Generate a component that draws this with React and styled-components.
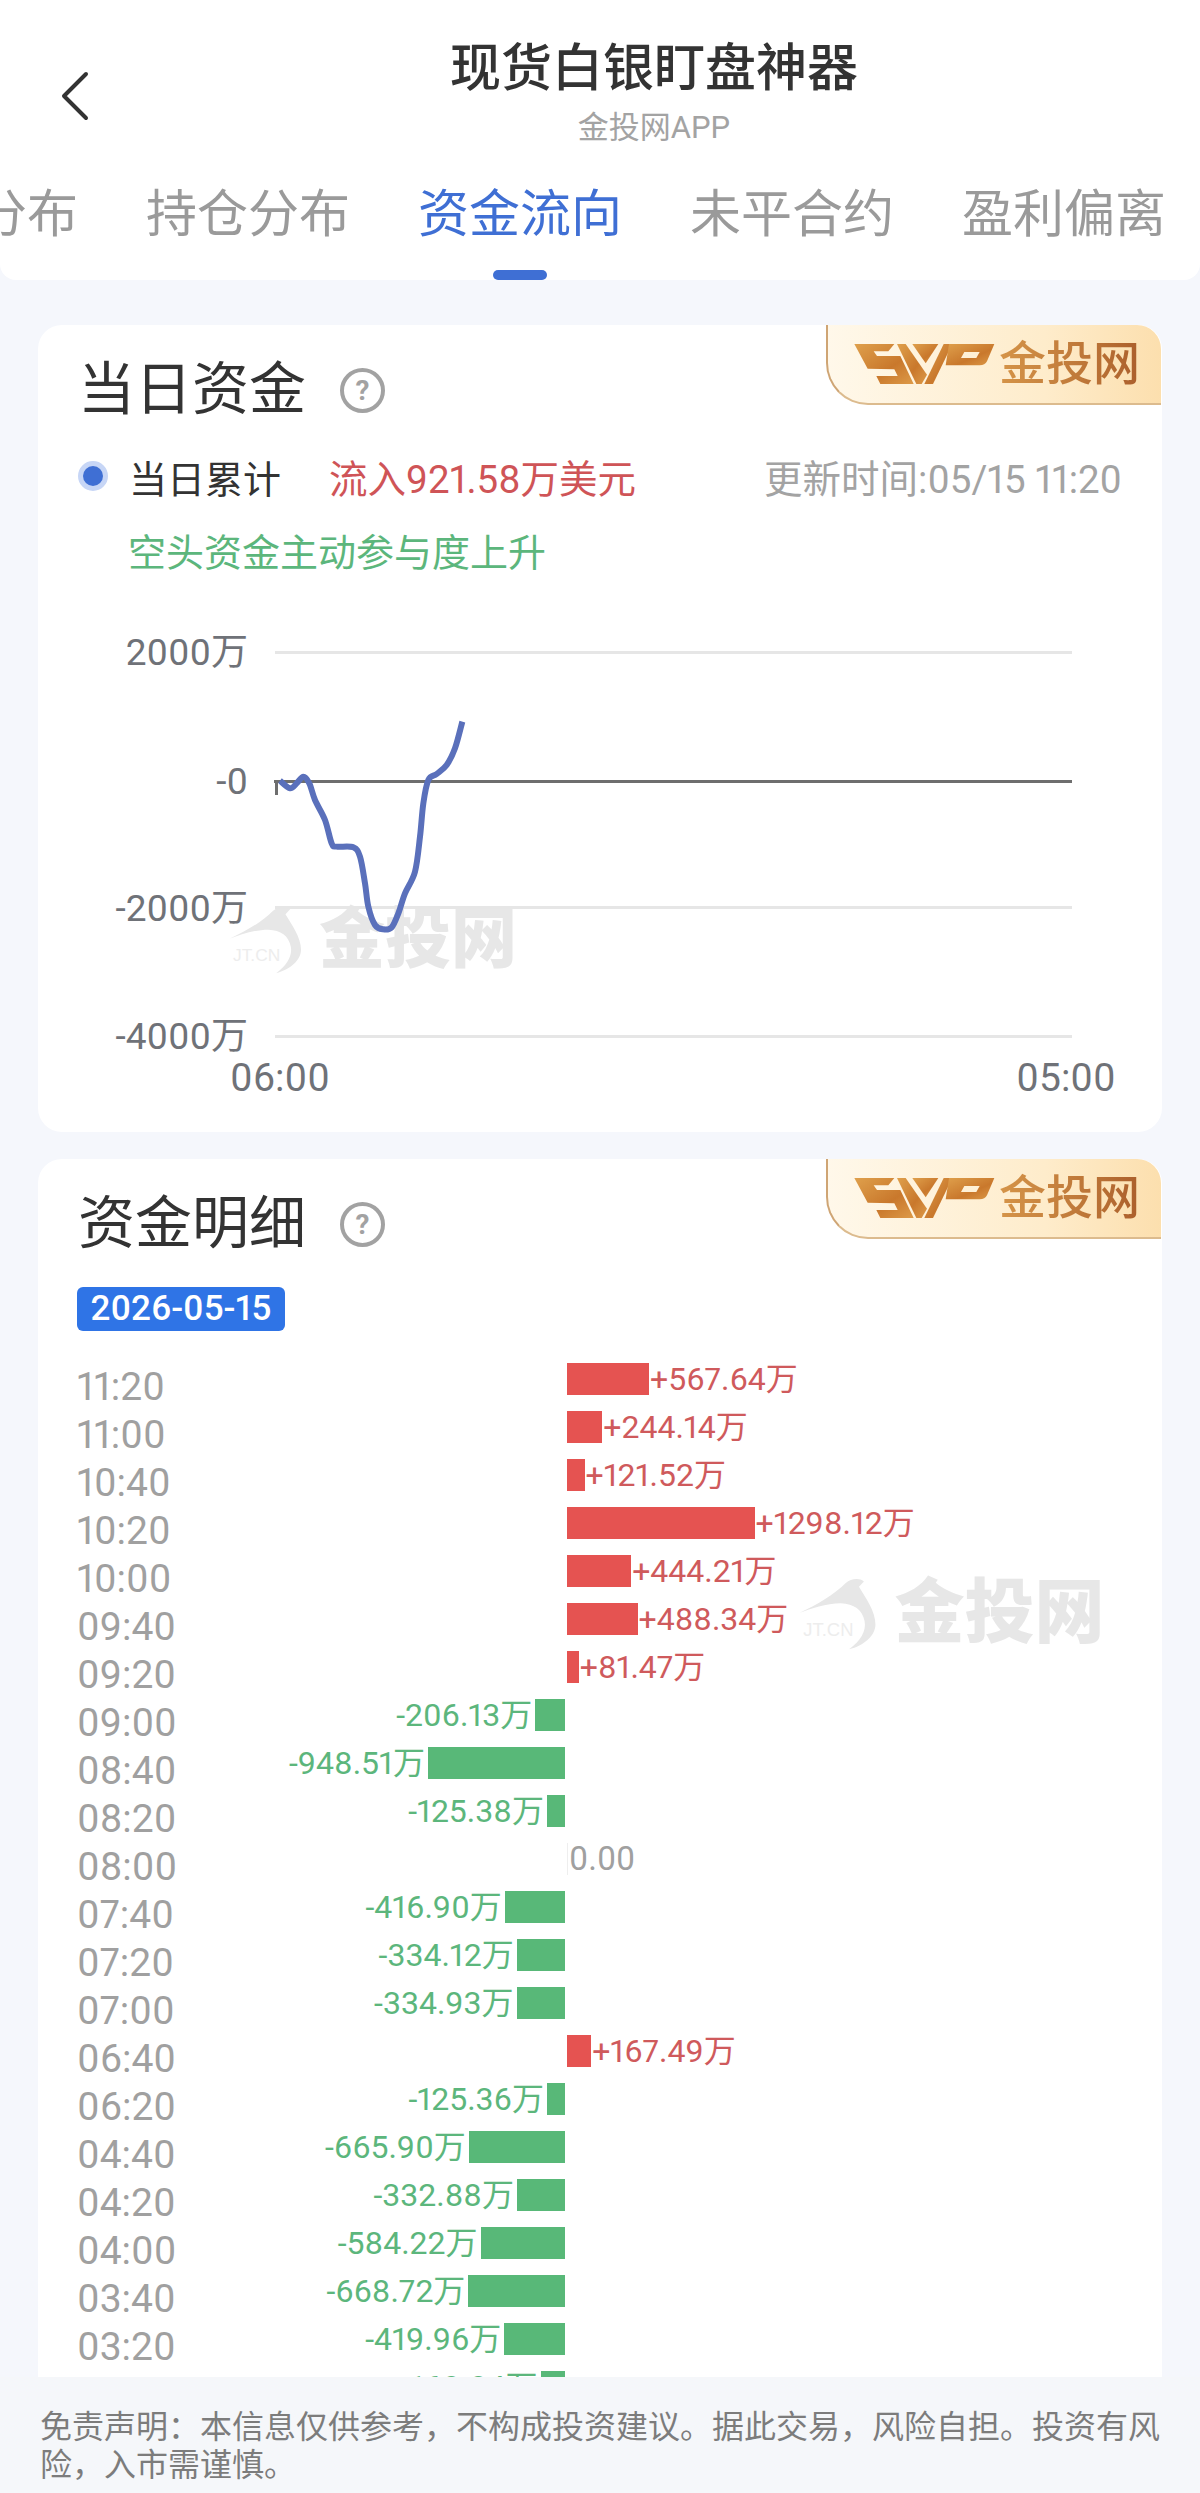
import styled, { createGlobalStyle } from "styled-components";

const GlobalStyle = createGlobalStyle`
  html, body {
    margin: 0;
    padding: 0;
    background: #f5f7fc;
  }
  * {
    box-sizing: border-box;
  }
`;

const Page = styled.div`
  display: flex;
  flex-direction: column;
  width: 1200px;
  height: 2493px;
  overflow: hidden;
  background: #f5f7fc;
  font-family: Roboto, "Noto Sans CJK SC", sans-serif;
  font-variant-numeric: proportional-nums;
`;

const Header = styled.header`
  flex: none;
  height: 280px;
  padding-top: 41px;
  background: #fff;
  border-radius: 0 0 16px 16px;
  overflow: hidden;
`;

const Nav = styled.div`
  display: grid;
  grid-template-columns: 108px 1fr;
  height: 107px;
`;

const Back = styled.div`
  display: flex;
  align-items: center;
  padding: 2px 0 0 61px;
`;

const NavText = styled.div`
  display: flex;
  flex-direction: column;
  align-items: center;
`;

const NavTitle = styled.div`
  font-size: 51px;
  line-height: 56px;
  font-weight: 500;
  color: #333;
`;

const NavSub = styled.div`
  margin-top: 11px;
  font-size: 31px;
  line-height: 40px;
  color: #a3a3a3;
`;

const Tabs = styled.div`
  display: flex;
  gap: 68px;
  margin: 37px 0 0 -126px;
  width: 1400px;
`;

const Tab = styled.div`
  flex: none;
  font-size: 51px;
  line-height: 60px;
  white-space: nowrap;
  color: ${(p) => (p.$active ? "#3f6fd4" : "#9a9a9a")};

  &::after {
    content: "";
    display: block;
    width: 54px;
    height: 10px;
    margin: 25px auto 0;
    border-radius: 5px;
    background: ${(p) => (p.$active ? "#3f6fd4" : "transparent")};
  }
`;

const Content = styled.main`
  flex: 1;
  min-height: 0;
  overflow: hidden;
  display: flex;
  flex-direction: column;
  gap: 27px;
  padding: 45px 38px 0;
`;

const Card = styled.section`
  position: relative;
  flex: none;
  background: #fff;
  border-radius: 24px;
  padding-top: 37px;
`;

const CardHead = styled.div`
  display: flex;
  align-items: center;
  gap: 34px;
  padding-left: 40px;
`;

const CardTitle = styled.h2`
  margin: 0;
  font-size: 57px;
  line-height: 56px;
  font-weight: 400;
  color: #333;
`;

const Help = styled.span`
  display: flex;
  align-items: center;
  justify-content: center;
  width: 45px;
  height: 45px;
  border: 4px solid #a2a2a2;
  border-radius: 50%;
  font-size: 28px;
  font-weight: 700;
  color: #a2a2a2;
`;

const Badge = styled.div`
  position: absolute;
  top: 0;
  right: 1px;
  display: flex;
  align-items: center;
  gap: 0;
  width: 335px;
  height: 80px;
  padding-left: 19px;
  border-left: 2px solid #cfa574;
  border-bottom: 2px solid #dcbb8e;
  border-radius: 0 24px 0 42px;
  background: linear-gradient(90deg, #fff8ea 0%, #feeccb 65%, #fcdfae 100%);
`;

const BadgeText = styled.span`
  margin-left: -3px;
  font-size: 47px;
  line-height: 60px;
  font-weight: 500;
  background: linear-gradient(90deg, #d59448 0%, #c07a3a 55%, #ab5f2c 100%);
  -webkit-background-clip: text;
  background-clip: text;
  color: transparent;
`;

const LogoWrap = styled.span`
  display: flex;
  flex: none;
  filter: blur(0.5px);
`;

const Legend = styled.div`
  display: flex;
  align-items: center;
  height: 44px;
  margin-top: 36px;
  padding: 0 40px;
  font-size: 38.5px;
  white-space: nowrap;
`;

const Dot = styled.span`
  flex: none;
  width: 30px;
  height: 30px;
  border-radius: 50%;
  background: #c7d6f6;
  border: 5px solid #c7d6f6;

  &::before {
    content: "";
    display: block;
    width: 20px;
    height: 20px;
    border-radius: 50%;
    background: #3f6fd4;
  }
`;

const LegendName = styled.span`
  margin-left: 21px;
  font-size: 38px;
  color: #333;
`;

const Inflow = styled.span`
  margin-left: 48px;
  color: #cf5457;
`;

const Updated = styled.span`
  margin-left: auto;
  color: #a3a3a3;
`;

const Trend = styled.div`
  margin: 33px 0 0 90px;
  font-size: 38px;
  line-height: 44px;
  color: #5cb67c;
`;

const ChartSvg = styled.svg`
  position: relative;
  z-index: 1;
  display: block;
  width: 1124px;
  height: 490px;
  margin: 45px 0 22px;
`;

const AxisText = styled.text`
  font-family: Roboto, "Noto Sans CJK SC", sans-serif;
  font-size: ${(p) => p.$size || 37}px;
  fill: #6f7278;
`;

const Watermark = styled.div`
  position: absolute;
  left: ${(p) => p.$left}px;
  top: ${(p) => p.$top}px;
  display: flex;
  align-items: center;
  gap: 0.25em;
  font-size: ${(p) => p.$size}px;
  line-height: 1.05;
  font-weight: 900;
  color: #e7e7e7;
  white-space: nowrap;
  pointer-events: none;

  svg {
    width: 1.13em;
    height: 1.05em;
  }
`;

const DateTag = styled.div`
  width: 208px;
  height: 44px;
  margin: 35px 0 0 39px;
  border-radius: 6px;
  background: #2f74e6;
  color: #fff;
  font-size: 35px;
  line-height: 44px;
  font-weight: 500;
  text-align: center;
`;

const Rows = styled.div`
  margin: 32px 0 0 39px;
`;

const Row = styled.div`
  display: grid;
  grid-template-columns: 488px 1fr;
  column-gap: 2px;
  height: 48px;
`;

const NegSide = styled.div`
  display: flex;
  align-items: flex-start;
`;

const Time = styled.span`
  font-size: 39px;
  line-height: 48px;
  color: #a0a0a0;
`;

const Value = styled.span`
  font-size: 32px;
  line-height: 32px;
  white-space: nowrap;
  color: ${(p) => (p.$up ? "#cf5a5c" : "#5cb67c")};
`;

const NegValue = styled(Value)`
  margin: 0 3px 0 auto;
`;

const PosSide = styled.div`
  display: flex;
  align-items: flex-start;
  gap: 1px;
`;

const Bar = styled.span`
  flex: none;
  height: 32px;
  background: ${(p) => (p.$up ? "#e55351" : "#58b878")};
`;

const Zero = styled.span`
  height: 32px;
  padding-left: 1px;
  border-left: 1px solid #eee;
  font-size: 33px;
  line-height: 32px;
  color: #a0a0a0;
`;

const Footer = styled.footer`
  flex: none;
  height: 116px;
  padding: 31px 36px 0 40px;
  background: #f5f7fa;
  font-size: 32px;
  line-height: 38px;
  color: #7c7c7c;
`;

const TABS = ["多空分布", "持仓分布", "资金流向", "未平合约", "盈利偏离"];

const FLOWS = [
  ["11:20", 567.64], ["11:00", 244.14], ["10:40", 121.52], ["10:20", 1298.12],
  ["10:00", 444.21], ["09:40", 488.34], ["09:20", 81.47], ["09:00", -206.13],
  ["08:40", -948.51], ["08:20", -125.38], ["08:00", 0], ["07:40", -416.9],
  ["07:20", -334.12], ["07:00", -334.93], ["06:40", 167.49], ["06:20", -125.36],
  ["04:40", -665.9], ["04:20", -332.88], ["04:00", -584.22], ["03:40", -668.72],
  ["03:20", -419.96], ["03:00", -168.84],
];

// traced from the chart, in page pixels
const CURVE = [
  [600, 482], [630, 505], [650, 490], [670, 470], [688, 490], [705, 540], [735, 600],
  [755, 670], [770, 680], [820, 682], [840, 710], [855, 790], [865, 860], [885, 915],
  [910, 928], [935, 922], [955, 880], [975, 820], [1005, 755], [1020, 650], [1030, 550],
  [1045, 480], [1070, 462], [1100, 435], [1125, 385], [1147, 305],
].map(([x, y]) => [80 + x / 3, 620 + y / 3]);

const smoothPath = (pts) => {
  let d = `M${pts[0][0]} ${pts[0][1]}`;
  for (let i = 0; i < pts.length - 1; i++) {
    const p0 = pts[i - 1] || pts[i];
    const p1 = pts[i];
    const p2 = pts[i + 1];
    const p3 = pts[i + 2] || p2;
    const c1 = [p1[0] + (p2[0] - p0[0]) / 6, p1[1] + (p2[1] - p0[1]) / 6];
    const c2 = [p2[0] - (p3[0] - p1[0]) / 6, p2[1] - (p3[1] - p1[1]) / 6];
    d += ` C${c1[0]} ${c1[1]} ${c2[0]} ${c2[1]} ${p2[0]} ${p2[1]}`;
  }
  return d;
};

function Bird() {
  return (
    <svg viewBox="20 18 240 220">
      <path
        fill="#e7e7e7"
        d="M25 125 C80 100 130 70 165 35 C180 22 205 18 220 30 L205 46 C225 80 255 120 255 160 C255 195 220 225 175 236 C210 210 228 180 222 150 C215 115 190 98 150 96 C105 96 60 112 25 125 Z"
      />
      <text x="36" y="196" fontSize="56" fontWeight="400" fontFamily="Liberation Sans, sans-serif" fill="#ededed">
        JT.CN
      </text>
    </svg>
  );
}

function SvpLogo() {
  return (
    <svg width="155" height="60" viewBox="0 0 465 180">
      <defs>
        <linearGradient id="svp" x1="0" y1="0" x2="1" y2="1">
          <stop offset="0" stopColor="#dfa04c" />
          <stop offset="0.6" stopColor="#c9782c" />
          <stop offset="1" stopColor="#dd9a48" />
        </linearGradient>
      </defs>
      <g fill="url(#svp)">
        <polygon points="22,30 142,30 124,52 80,52 90,66 160,66 200,150 100,150 88,126 152,126 142,106 62,104" />
        <polygon points="150,30 176,30 240,122 224,150 208,150" />
        <polygon points="196,30 274,30 236,88" />
        <polygon points="290,30 316,30 258,150 232,150" />
        <path
          fillRule="evenodd"
          d="M306 30 H442 L420 82 Q414 94 398 94 H318 L296 94 Z M352 54 L342 72 H388 L398 54 Z"
        />
      </g>
    </svg>
  );
}

function BackIcon() {
  return (
    <svg width="28" height="50" viewBox="0 0 28 50" fill="none">
      <polyline points="25,3 3,25 25,47" stroke="#333" strokeWidth="4" strokeLinecap="round" strokeLinejoin="round" />
    </svg>
  );
}

function VipBadge() {
  return (
    <Badge>
      <LogoWrap>
        <SvpLogo />
      </LogoWrap>
      <BadgeText>金投网</BadgeText>
    </Badge>
  );
}

function FlowRow({ time, value }) {
  const width = Math.abs(value) * 0.1445;
  const text = `${value > 0 ? "+" : ""}${value.toFixed(2)}万`;
  return (
    <Row>
      <NegSide>
        <Time>{time}</Time>
        {value < 0 && <NegValue>{text}</NegValue>}
        {value < 0 && <Bar style={{ width }} />}
      </NegSide>
      <PosSide>
        {value > 0 && <Bar $up style={{ width }} />}
        {value > 0 && <Value $up>{text}</Value>}
        {value === 0 && <Zero>0.00</Zero>}
      </PosSide>
    </Row>
  );
}

export default function App() {
  return (
    <Page>
      <GlobalStyle />
      <Header>
        <Nav>
          <Back>
            <BackIcon />
          </Back>
          <NavText>
            <NavTitle>现货白银盯盘神器</NavTitle>
            <NavSub>金投网APP</NavSub>
          </NavText>
        </Nav>
        <Tabs>
          {TABS.map((t) => (
            <Tab key={t} $active={t === "资金流向"}>
              {t}
            </Tab>
          ))}
        </Tabs>
      </Header>

      <Content>
        <Card>
          <VipBadge />
          <CardHead>
            <CardTitle>当日资金</CardTitle>
            <Help>?</Help>
          </CardHead>
          <Legend>
            <Dot />
            <LegendName>当日累计</LegendName>
            <Inflow>流入921.58万美元</Inflow>
            <Updated>更新时间:05/15 11:20</Updated>
          </Legend>
          <Trend>空头资金主动参与度上升</Trend>
          <ChartSvg viewBox="38 620 1124 490">
            <line x1="275" x2="1072" y1="652.5" y2="652.5" stroke="#e6e6e6" strokeWidth="3" />
            <line x1="275" x2="1072" y1="907.5" y2="907.5" stroke="#e6e6e6" strokeWidth="3" />
            <line x1="275" x2="1072" y1="1036.5" y2="1036.5" stroke="#e6e6e6" strokeWidth="3" />
            <line x1="274" x2="1072" y1="781.5" y2="781.5" stroke="#6e6e6e" strokeWidth="3" />
            <line x1="276.5" x2="276.5" y1="781" y2="795" stroke="#6e6e6e" strokeWidth="3" />
            <AxisText x="248" y="665" textAnchor="end">2000万</AxisText>
            <AxisText x="248" y="794" textAnchor="end">-0</AxisText>
            <AxisText x="248" y="921" textAnchor="end">-2000万</AxisText>
            <AxisText x="248" y="1049" textAnchor="end">-4000万</AxisText>
            <AxisText $size={39} x="280" y="1091" textAnchor="middle">06:00</AxisText>
            <AxisText $size={39} x="1066" y="1091" textAnchor="middle">05:00</AxisText>
            <path d={smoothPath(CURVE)} fill="none" stroke="#5a70bb" strokeWidth="6" />
          </ChartSvg>
          <Watermark $left={190} $top={580} $size={66}>
            <Bird />
            金投网
          </Watermark>
        </Card>

        <Card>
          <VipBadge />
          <CardHead>
            <CardTitle>资金明细</CardTitle>
            <Help>?</Help>
          </CardHead>
          <DateTag>2026-05-15</DateTag>
          <Rows>
            {FLOWS.map(([time, value]) => (
              <FlowRow key={time} time={time} value={value} />
            ))}
          </Rows>
          <Watermark $left={760} $top={418} $size={70}>
            <Bird />
            金投网
          </Watermark>
        </Card>
      </Content>

      <Footer>免责声明：本信息仅供参考，不构成投资建议。据此交易，风险自担。投资有风险，入市需谨慎。</Footer>
    </Page>
  );
}
